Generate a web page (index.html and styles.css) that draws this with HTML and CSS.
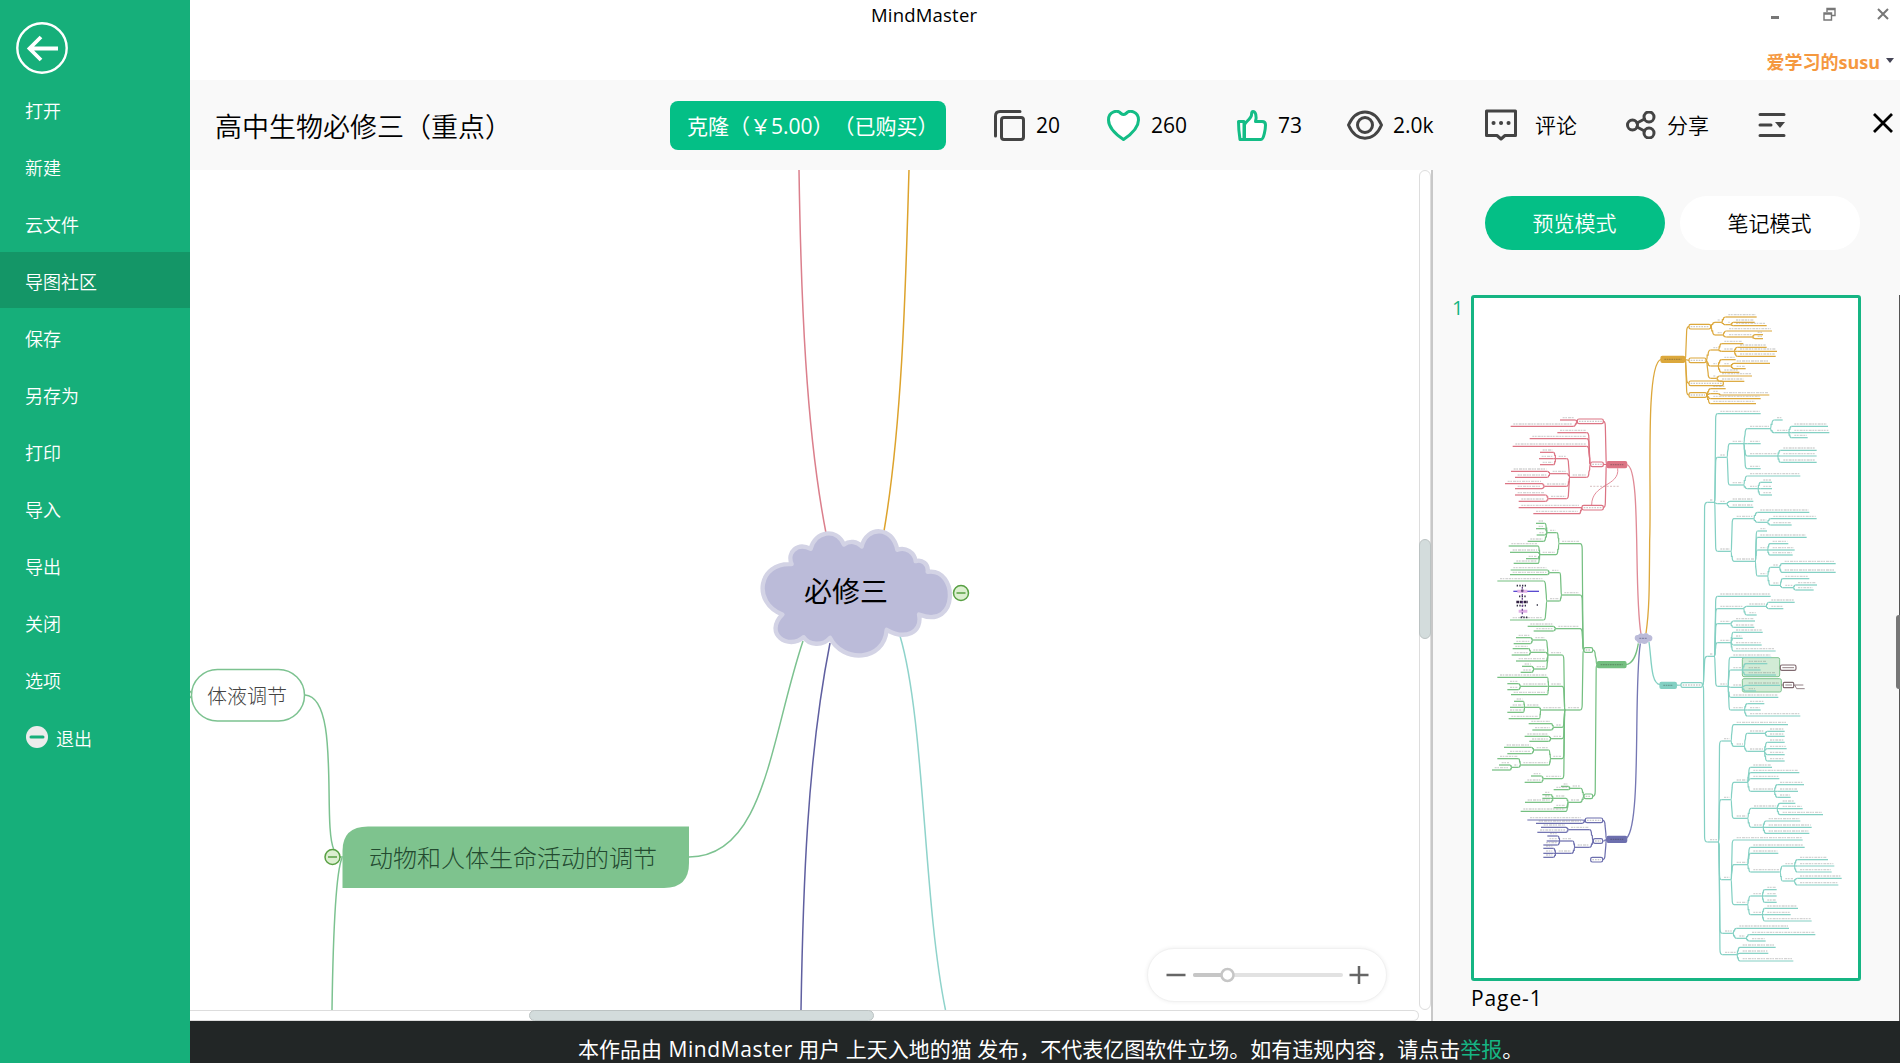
FILE: index.html
```html
<!DOCTYPE html>
<html lang="zh-CN">
<head>
<meta charset="utf-8">
<title>MindMaster</title>
<link rel="stylesheet" href="styles.css">
</head>
<body>
<div class="app">
  <nav class="sidebar">
    <svg class="back" viewBox="0 0 52 52"><circle cx="26" cy="26" r="24.7"/><path class="arrow" d="M42 26.5H13M25 15L13.500 26.500L25 38"/></svg>
    <ul class="menu">
      <li>打开</li>
      <li>新建</li>
      <li>云文件</li>
      <li class="active">导图社区</li>
      <li>保存</li>
      <li>另存为</li>
      <li>打印</li>
      <li>导入</li>
      <li>导出</li>
      <li>关闭</li>
      <li>选项</li>
      <li class="exit"><svg viewBox="0 0 22 22"><circle cx="11" cy="11" r="11"/><rect x="3.500" y="9.500" width="15" height="3" rx="1.500"/></svg>退出</li>
    </ul>
  </nav>
  <div class="main">
    <header class="titlebar">
      <div class="app-name">MindMaster</div>
      <div class="window-buttons">
        <svg width="10" height="14" viewBox="0 0 10 14"><path d="M1 10.500H9" stroke-width="3"/></svg>
        <svg width="13" height="14" viewBox="0 0 13 14"><path d="M4 5V1.500H12V8.500H9M4 2.500H12M1 6H8.500V13H1ZM1 7H8.500" stroke-width="1.400"/></svg>
        <svg width="12" height="14" viewBox="0 0 12 14"><path d="M1 2L11 12M11 2L1 12" stroke-width="2"/></svg>
      </div>
      <div class="user">爱学习的susu<i class="caret"></i></div>
    </header>
    <div class="toolbar">
      <h1>高中生物必修三（重点）</h1>
      <button class="clone">克隆（￥5.00）（已购买）</button>
      <div class="stat copy"><svg width="31" height="31" viewBox="0 0 31 31"><path d="M1.500 26V6Q1.500 1.500 6 1.500H26"/><rect x="7.500" y="7.500" width="22" height="22" rx="2.500"/></svg>20</div>
      <div class="stat heart"><svg width="33" height="31" viewBox="0 0 33 31"><path d="M16.500 29.500C12 26.500 1.500 19 1.500 10C1.500 1 11-.5 14 3.500Q16.500 5.500 19 3.500C22-.5 31.500 1 31.500 10C31.500 19 21 26.500 16.500 29.500Z"/></svg>260</div>
      <div class="stat like"><svg width="30" height="31" viewBox="0 0 30 31"><path d="M1.500 11.500H7V29.500H3Q1.500 20 1.500 11.500ZM7.500 29.500H24C27 29.500 28.500 18 28.500 15Q28.500 11.500 25 11.500H18.500C20 6 18.500 1.500 16 1.500Q14.500 1.500 14.500 5C14 9 8 12 7.500 15Z"/></svg>73</div>
      <div class="stat eye"><svg width="36" height="30" viewBox="0 0 36 30"><path d="M1.500 15C9-2.500 27-2.500 34.500 15C27 32.500 9 32.500 1.500 15Z"/><circle cx="18" cy="15" r="7.500"/></svg>2.0k</div>
      <div class="stat comment"><svg width="32" height="32" viewBox="0 0 32 32"><path d="M1.500 2H30.500V26.500H20L16 30L12 26.500H1.500Z"/><path d="M8.500 14H8.600M16 14H16.100M23.500 14H23.600" stroke-width="4"/></svg><span>评论</span></div>
      <div class="stat share"><svg width="30" height="28" viewBox="0 0 30 28"><circle cx="6.500" cy="14" r="5"/><circle cx="23" cy="6" r="5"/><circle cx="23" cy="22" r="5"/><path d="M11 12L18.500 8M11 16L18.500 20"/></svg><span>分享</span></div>
      <svg class="list" width="28" height="26" viewBox="0 0 28 26"><path d="M2 2.500H26M2 13H13M2 23.500H26"/><path class="solid" d="M17 10H27L22 16Z"/></svg>
      <svg class="close" width="22" height="22" viewBox="0 0 22 22"><path d="M2 2L20 20M20 2L2 20"/></svg>
    </div>
    <div class="workspace">
      <section class="canvas">
        <div class="canvas-row">
          <svg class="mindmap" width="1228" height="840" viewBox="190 170 1228 840">
            <g fill="none" stroke-width="1.500">
              <path stroke="#db7f8c" d="M799 170C801 300 806 430 826 533"/>
              <path stroke="#dda32c" d="M909 170C906 270 903 420 884 531"/>
              <path stroke="#7cc290" d="M689 857C765 857 770 740 803 641"/>
              <path stroke="#5f5fa0" d="M801 1010C803 890 807 760 830 643"/>
              <path stroke="#8fd3cb" d="M945.500 1010C923 900 925 720 900 636"/>
              <path stroke="#7cc290" d="M305 695C341 697 322 825 334 850M340 857H343M342 858C336 872 333 940 332 1010"/>
              <path stroke="#7cc290" d="M190 691L192.500 694.500L190 698"/>
            </g>
            <path class="cloud" transform="translate(740 500.500) scale(.33333)" d="M155 191C140 155 172 125 212 145C225 92 288 80 312 132C328 120 352 122 365 138C380 76 458 75 472 148C497 138 524 156 527 182C546 176 566 190 563 214C654 200 658 390 537 342C548 396 496 420 440 388C432 484 308 488 270 412C248 438 206 434 191 410C146 450 70 400 127 342C35 306 55 184 155 191Z"/>
            <rect x="191.500" y="669.500" width="113" height="51.500" rx="26" fill="#fff" stroke="#7cc290" stroke-width="1.500"/>
            <path fill="#7ec38e" d="M342.500 888V851Q342.500 826.500 368 826.500H689V863Q689 888 664 888Z"/>
            <g class="fold"><circle cx="961" cy="593" r="7.500"/><path d="M956.500 593H965.500"/><circle cx="332.500" cy="857" r="7.500"/><path d="M328 857H337"/></g>
            <text x="804" y="602" class="root-label">必修三</text>
            <text x="207" y="704" class="leaf-label">体液调节</text>
            <text x="369" y="867" class="branch-label">动物和人体生命活动的调节</text>
          </svg>
          <div class="vscroll"><i></i></div>
        </div>
        <div class="hscroll"><i></i></div>
        <div class="zoom">
          <svg width="238" height="52" viewBox="0 0 238 52"><path stroke="#666" stroke-width="2.500" d="M18.500 26H37.500M201.500 26H220.500M211 17V35"/><path stroke="#e2e2e2" stroke-width="4" stroke-linecap="round" d="M47 26H193"/><path stroke="#c6c6c6" stroke-width="4" stroke-linecap="round" d="M47 26H80"/><circle cx="79.500" cy="26" r="6" fill="#fff" stroke="#c6c6c6" stroke-width="2.500"/></svg>
        </div>
      </section>
      <aside class="panel">
        <div class="modes"><button class="mode on">预览模式</button><button class="mode">笔记模式</button></div>
        <div class="pages">
          <span class="page-number">1</span>
          <figure class="page">
            <svg id="overview" viewBox="42 24 1152 2040"></svg>
            <figcaption>Page-1</figcaption>
          </figure>
        </div>
        <div class="edge"><i></i></div>
      </aside>
    </div>
    <footer class="notice">本作品由 <span>MindMaster</span> 用户 上天入地的猫 发布，不代表亿图软件立场。如有违规内容，请点击<a>举报</a>。</footer>
  </div>
</div>
<script src="overview.js"></script>
</body>
</html>
```
FILE: styles.css
```css
* { box-sizing: border-box; }
body {
  margin: 0;
  color: #000;
  font-family: "Open Sans", "Noto Sans CJK SC", sans-serif;
}
button { border: 0; font: inherit; }
ul, h1, figure { margin: 0; padding: 0; }
svg { display: block; flex: none; fill: none; }
.app { display: flex; width: 1900px; height: 1063px; overflow: hidden; background: #fff; }

.sidebar { width: 190px; flex: none; padding-top: 22px; background: #16af7a; color: #fff; }
.back { width: 52px; height: 52px; margin-left: 16px; stroke: #fff; stroke-width: 2.400; }
.back .arrow { stroke-width: 3.800; }
.menu { list-style: none; padding-top: 7px; font-size: 18px; font-weight: 350; }
.menu li { height: 56px; margin-bottom: 1px; padding: 1px 0 0 25px; display: flex; align-items: center; }
.menu .active { background: #149667; }
.menu .exit { gap: 8px; padding-left: 26px; padding-top: 3px; }
.menu .exit svg { width: 22px; height: 22px; fill: #ececec; margin-top: -2px; }
.menu .exit rect { fill: #16af7a; }

.main { flex: 1; min-width: 0; display: flex; flex-direction: column; }
.titlebar { height: 80px; flex: none; display: grid; grid-template-columns: 681px 120px 1fr; grid-template-rows: 44px 36px; }
.app-name { grid-column: 2; font-size: 18.500px; line-height: 29px; letter-spacing: .2px; }
.window-buttons { grid-column: 3; display: flex; justify-content: flex-end; gap: 41px; padding: 7px 11px 0 0; stroke: #777; }
.window-buttons svg:first-child { margin-right: 2px; }
.user { grid-column: 3; display: flex; justify-content: flex-end; align-items: center; gap: 6px; padding: 0 6px 3px 0; font-size: 18px; font-weight: 700; color: #f5983f; }
.caret { border: 4px solid transparent; border-top: 5px solid #445; border-bottom: 0; }

.toolbar { height: 90px; flex: none; display: flex; align-items: center; padding: 0 6px 0 25px; background: #f9f9f9; font-size: 21px; }
.toolbar h1 { width: 455px; flex: none; font-size: 27px; font-weight: 350; padding-top: 1px; white-space: nowrap; }
.clone { width: 276px; height: 49px; flex: none; border-radius: 8px; padding: 0 0 1px 17px; text-align: left; background: #04bf86; color: #fff; font-size: 21px; font-weight: 400; white-space: nowrap; text-spacing-trim: space-all; }
.stat { display: flex; align-items: center; flex: none; stroke-width: 3; white-space: nowrap; }
.stat svg { stroke: #444; stroke-linecap: round; stroke-linejoin: round; }
.stat span { margin-top: -2px; }
.copy { width: 113px; margin-left: 48px; gap: 11px; }
.heart { gap: 11px; width: 130px; }
.like { gap: 11px; width: 110px; }
.heart svg, .like svg { stroke: #14bd86; fill: #fff; }
.eye { gap: 10px; width: 138px; }
.comment { gap: 18px; width: 141px; font-weight: 350; }
.share { gap: 11px; width: 132px; font-weight: 350; }
.list { stroke: #444; stroke-width: 3; stroke-linecap: round; }
.list .solid { fill: #444; stroke: none; }
.close { margin-left: auto; margin-top: -4px; stroke: #000; stroke-width: 2.800; }

.workspace { height: 851px; display: flex; }
.canvas { position: relative; width: 1241px; height: 851px; flex: none; }
.canvas-row { display: flex; }
.cloud { fill: #bbbbd9; stroke: #d3d3e5; stroke-width: 13; stroke-linejoin: round; }
.fold { fill: #dcefd0; stroke: #58a043; stroke-width: 1.500; }
.mindmap text { font-weight: 300; }
.mindmap .root-label { font-size: 28px; font-weight: 400; fill: #000; }
.mindmap .leaf-label { font-size: 20px; fill: #444; }
.mindmap .branch-label { font-size: 24px; fill: #234a30; }
.vscroll { width: 12px; height: 840px; margin-left: 1px; border: 1.500px solid #ddd; border-radius: 6px; }
.vscroll i, .hscroll i { display: block; background: #d3dcdc; border: 1px solid #bcc3c3; border-radius: 6px; }
.vscroll i { width: 12px; height: 100px; margin: 368px 0 0 -1px; }
.hscroll { width: 1229px; height: 11px; border: 1px solid #ddd; border-left: 0; border-radius: 0 6px 6px 0; }
.hscroll i { width: 345px; height: 11px; margin: -1px 0 0 339px; }
.zoom { position: absolute; left: 956.500px; top: 778px; width: 240px; height: 54px; border-radius: 27px; background: #fff; border: 1px solid #f1f1f1; box-shadow: 0 0 4px #eee; }

.panel { position: relative; flex: 1; padding: 26px 0 0 20px; border-left: 2px solid #c8c8c8; background: #f9f9f9; }
.modes { display: flex; gap: 15px; padding-left: 32px; }
.mode { width: 180px; height: 54px; border-radius: 27px; background: #fff; font-size: 21px; font-weight: 350; padding: 0 1px 2px 0; }
.mode.on { background: #04bf86; color: #fff; }
.pages { display: flex; margin-top: 44.500px; }
.page-number { width: 18px; font-size: 20px; line-height: 26px; color: #16b583; margin-left: -1px; margin-right: 1px; }
.page svg { width: 390px; height: 686px; background: #fff; border: 3px solid #16b583; border-radius: 3px; }
.page figcaption { font-size: 21px; line-height: 35px; letter-spacing: .9px; }
.edge { position: absolute; right: 0; top: 125px; width: 1px; height: 726px; background: #555; }
.edge i { position: absolute; right: 0; top: 320px; width: 4px; height: 74px; border-radius: 3px 0 0 3px; background: #777; }

.notice { height: 42px; padding-left: 388px; background: #222626; color: #fff; font-size: 21px; line-height: 56px; white-space: nowrap; overflow: hidden; }
.notice span { letter-spacing: .6px; margin-left: 1px; }
.notice a { color: #16b583; }
```
FILE: overview.js
```js
// Overview of the whole map. A node is [startX, endX, y, children?, shape?];
// shape "box" is an outlined topic, "main" a filled one.
const maps = [
["#dca83c", [603,674,208,[
  [687,752,110,[[765,784,97,[[797,890,81],[797,812,104,[[820,884,97],[820,920,107]]]]],[765,788,135,[[799,936,123],[799,877,141,[[885,909,134],[885,909,146]]]]]],"box"],
  [687,738,211,[[752,775,180,[[785,850,161],[785,822,184,[[832,920,172],[832,951,184],[832,947,199]]]]],[752,773,228,[[785,827,209],[785,812,228,[[822,930,220],[822,857,236]]],[785,838,247]]],[752,770,265,[[778,876,258],[778,853,274]]]],"box"],
  [687,790,280,[],"box"],
  [687,740,315,[[752,797,296],[752,776,311,[[783,928,315]]],[752,902,326],[752,888,341]],"box"]],"main"]],
["#dc7484", [500,441,524,[
  [430,352,394,[[345,300,390],[340,152,409]],"box"],
  [430,392,523,[[380,292,428],[380,209,446],[380,158,469],[380,330,562,[[320,288,506,[[280,240,487],[280,237,506],[280,240,524]]],[320,270,551,[[262,153,544],[262,165,562]]],[320,253,589,[[246,135,581],[246,165,596]]],[320,265,626,[[257,165,615],[257,176,634]]]]]],"box"],
  [430,366,653,[[360,176,653],[357,220,671]],"box"]],"main"]],
["#74bf80", [498,412,1124,[
  [398,372,1080,[
    [360,298,761,[[290,262,728,[[254,228,700],[254,228,716],[254,230,735],[250,203,754]]],[288,240,794,[[234,146,768],[234,150,787],[232,198,806],[234,161,820]]]]],
    [360,305,915,[[298,268,848,[[262,152,840],[262,150,854]]],[298,262,933,[[250,112,873],[250,150,990]]]]],
    [360,287,1016,[[280,203,1009],[280,221,1023]]],
    [360,316,1260,[
      [306,265,1095,[[257,218,1050,[[211,168,1043],[211,161,1061]]],[257,212,1087,[[206,158,1076],[206,155,1095]]],[257,168,1113],[257,222,1137,[[215,186,1129],[215,182,1147]]]]],
      [306,266,1189,[[262,112,1162],[262,182,1189,[[175,142,1181],[175,142,1199]]],[262,153,1214]]],
      [306,242,1260,[[238,194,1252,[[190,162,1234],[190,150,1252],[190,142,1267]]],[238,146,1286]]],
      [306,281,1312,[[273,206,1301],[273,217,1320]]],
      [306,273,1346,[[266,194,1339],[266,208,1354]]],
      [306,272,1406,[[266,222,1380,[[214,132,1372],[214,142,1391]]],[266,182,1425,[[175,112,1406],[175,155,1432,[[150,117,1425],[150,96,1440]]]]]]],
      [306,250,1466,[[244,213,1458],[244,194,1477]]]]]],"box"],
  [398,372,1519,[[362,330,1495,[[325,303,1489],[325,281,1499]]],[360,325,1537,[[318,280,1525,[[272,247,1514],[272,247,1525],[272,195,1537]]],[318,281,1553],[318,182,1564]]]],"box"]],"main"]],
["#6d6fae", [500,441,1648,[
  [428,376,1591,[[366,202,1590],[366,228,1600]],"box"],
  [428,400,1653,[[388,325,1619,[[318,243,1612],[318,232,1627]]],[388,345,1672,[[338,300,1653,[[293,262,1638],[293,260,1653],[293,250,1665]]],[335,288,1690,[[280,250,1675],[280,250,1690],[280,250,1702]]]]]],"box"],
  [428,392,1709,[],"box"]],"main"]],
["#83d0c3", [600,649,1186,[[663,727,1185,[
  [742,762,637,[
    [773,902,371],
    [773,800,502,[[810,850,461,[[862,930,416,[[943,968,390],[943,985,428,[[995,1104,409],[995,1108,428],[995,1043,443]]]]],[862,902,461],[862,952,498,[[962,1070,481],[962,1070,498],[962,1070,517]]],[862,902,536]]],[810,850,585,[[862,1021,558],[862,893,596,[[902,936,577],[902,936,596],[902,936,615]]]]]]],
    [773,800,641,[[810,880,634],[810,880,652]]],
    [773,812,784,[[822,880,686,[[893,1048,667],[893,922,697,[[932,1070,686],[932,995,705]]]]],[822,885,814,[[893,921,723],[893,1040,742],[893,922,780,[[930,985,761],[930,1004,780],[930,998,795]]],[893,922,858,[[932,958,832,[[966,1127,821],[966,1127,847]]],[932,960,886,[[968,1048,866],[968,1000,893,[[1006,1071,885],[1006,1061,900]]]]]]]]]]]]],
  [742,762,1099,[
    [773,932,919],[773,850,956,[[860,918,949,[[926,1004,937],[926,970,956]]],[860,890,975]]],
    [773,812,1001,[[820,885,993],[820,883,1012]]],
    [773,812,1058,[[820,908,1027],[820,848,1045],[820,905,1065],[820,947,1083]]],
    [773,803,1189,[[812,934,1102],[812,846,1140,[[858,922,1121],[858,902,1140],[858,948,1155]]],[812,846,1192,[[858,960,1186],[858,888,1203]]],[812,955,1222],[812,852,1260,[[862,913,1241],[862,902,1260],[862,1021,1278]]]]]]],
  [742,774,1656,[
    [784,812,1353,[[822,984,1304],[822,852,1369,[[862,915,1330,[[922,974,1324],[922,974,1339]]],[862,912,1384,[[922,974,1357],[922,980,1376],[922,974,1394],[922,974,1413]]]]]]],
    [784,812,1529,[[822,862,1477,[[872,936,1432],[872,1018,1448],[872,958,1466],[872,942,1504,[[952,1032,1484],[952,1014,1504],[952,992,1522]]]]],[822,862,1585,[[874,950,1555,[[960,1006,1540],[960,1028,1556],[960,1089,1574]]],[874,908,1612,[[918,1021,1593],[918,1055,1612],[918,1048,1630]]]]]]],
    [784,812,1769,[[822,1028,1650],[822,862,1724,[[872,1034,1672],[872,955,1690],[872,960,1746,[[968,1002,1728,[[1012,1104,1709],[1012,1123,1728],[1012,1115,1746]]],[968,1002,1773,[[1012,1145,1765],[1012,1135,1785]]]]]]],[822,862,1844,[[872,906,1818,[[914,950,1799],[914,950,1818],[914,950,1837]]],[872,906,1874,[[914,1014,1855],[914,992,1874],[914,1055,1893]]]]]]],
    [787,818,1930,[[830,987,1915],[830,858,1945,[[868,1066,1934],[868,917,1953]]]]],
    [787,830,1994,[[840,947,1972],[840,925,1990],[840,1000,2013]]]]]],"box"]],"main"]]
];

// A branch leaves its parent steeply and rounds into the child's baseline.
function link(x1, y1, x2, y2) {
  const dx = x2 - x1, dy = y2 - y1, s = Math.sign(dy);
  const r = Math.min(Math.abs(dy) / 2, 16);
  const near = x1 + dx * 0.25, far = x1 + dx * 0.45;
  return `M${x1} ${y1}Q${near} ${y1} ${near} ${y1 + s * r}L${far} ${y2 - s * r}Q${far} ${y2} ${x2} ${y2}`;
}

function draw([x1, x2, y, children = [], shape], color) {
  const left = Math.min(x1, x2), width = Math.abs(x2 - x1);
  let out = "";
  if (shape === "main") {
    out += `<rect x="${left}" y="${y - 9}" width="${width}" height="18" rx="4" fill="${color}"/>`;
    out += `<path d="M${left + 10} ${y}H${left + width - 10}" stroke="#333" stroke-opacity=".3" stroke-width="4" stroke-dasharray="5 2"/>`;
  } else if (shape === "box") {
    out += `<rect x="${left}" y="${y - 7}" width="${width}" height="14" rx="5"/>`;
    out += `<path d="M${left + 5} ${y}H${left + width - 5}" stroke="#888" stroke-opacity=".45" stroke-width="4" stroke-dasharray="5 3"/>`;
  } else {
    out += `<path d="M${x1} ${y}H${x2}"/>`;
    out += `<path d="M${left + 8} ${y - 7}H${left + width - 3}" stroke="#777" stroke-opacity=".32" stroke-width="4" stroke-dasharray="6 2 5 3 9 2"/>`;
  }
  for (const child of children) {
    out += `<path d="${link(x2, y, child[0], child[2])}"/>` + draw(child, color);
  }
  return out;
}

let picture = `<g fill="#bfe3c4" fill-opacity=".7" stroke="#7fc490" stroke-width="3"><rect x="847" y="1103" width="112" height="57" rx="5"/><rect x="847" y="1166" width="117" height="40" rx="5"/></g>`;
for (const [color, root] of maps) {
  picture += `<g fill="none" stroke="${color}" stroke-width="3.700">${draw(root, color)}</g>`;
}
picture += `<g fill="none" stroke-width="4">
  <path stroke="#e08a96" d="M500 524C545 530 520 900 543 1032"/>
  <path stroke="#dda83c" d="M603 208C555 220 575 600 569 750C568 900 568 960 558 1030"/>
  <path stroke="#74bf80" d="M498 1124C522 1120 530 1090 535 1060"/>
  <path stroke="#7577b3" d="M500 1644C545 1600 520 1200 541 1060"/>
  <path stroke="#83d0c3" d="M567 1056C575 1110 572 1180 600 1184"/>
  <path stroke="#dc7484" stroke-width="2.500" d="M473 535C480 590 395 580 395 645"/>
  <path stroke="#b08080" stroke-opacity=".4" d="M390 589H478" stroke-dasharray="6 4"/>
  <g stroke="#806a70" stroke-width="3.500"><rect x="961" y="1125" width="47" height="16" rx="5"/><rect x="970" y="1177" width="31" height="16" rx="3"/><path stroke-width="2.500" d="M964 1185H970M1001 1185H1030M1004 1185L1010 1196H1034M967 1133H1002M976 1185H996"/></g>
</g>
<path fill="#bbbbd9" d="M524 1045Q524 1034 534 1035Q541 1026 550 1032Q560 1025 567 1035Q579 1036 577 1047Q575 1055 565 1055Q558 1066 545 1060Q532 1062 530 1053Q524 1052 524 1045Z"/>
<path d="M538 1045H562" stroke="#88a" stroke-width="4" stroke-dasharray="6 2"/>
<g fill="none"><path stroke="#5a4ad0" stroke-width="4" d="M160 904H237"/><path stroke="#e0b0e6" stroke-width="9" d="M172 904H202M176 964H202"/><path stroke="#302040" stroke-width="7" d="M169 936H204M184 902H190" stroke-dasharray="9 2"/><path stroke="#334" stroke-width="5" stroke-dasharray="4 4" d="M170 887H202M177 919H198M170 947H202M182 982H205M230 945H234"/><path stroke="#6a4a90" stroke-width="4" d="M187 890V980" stroke-dasharray="6 5"/></g>`;
document.getElementById("overview").innerHTML = picture;
```
